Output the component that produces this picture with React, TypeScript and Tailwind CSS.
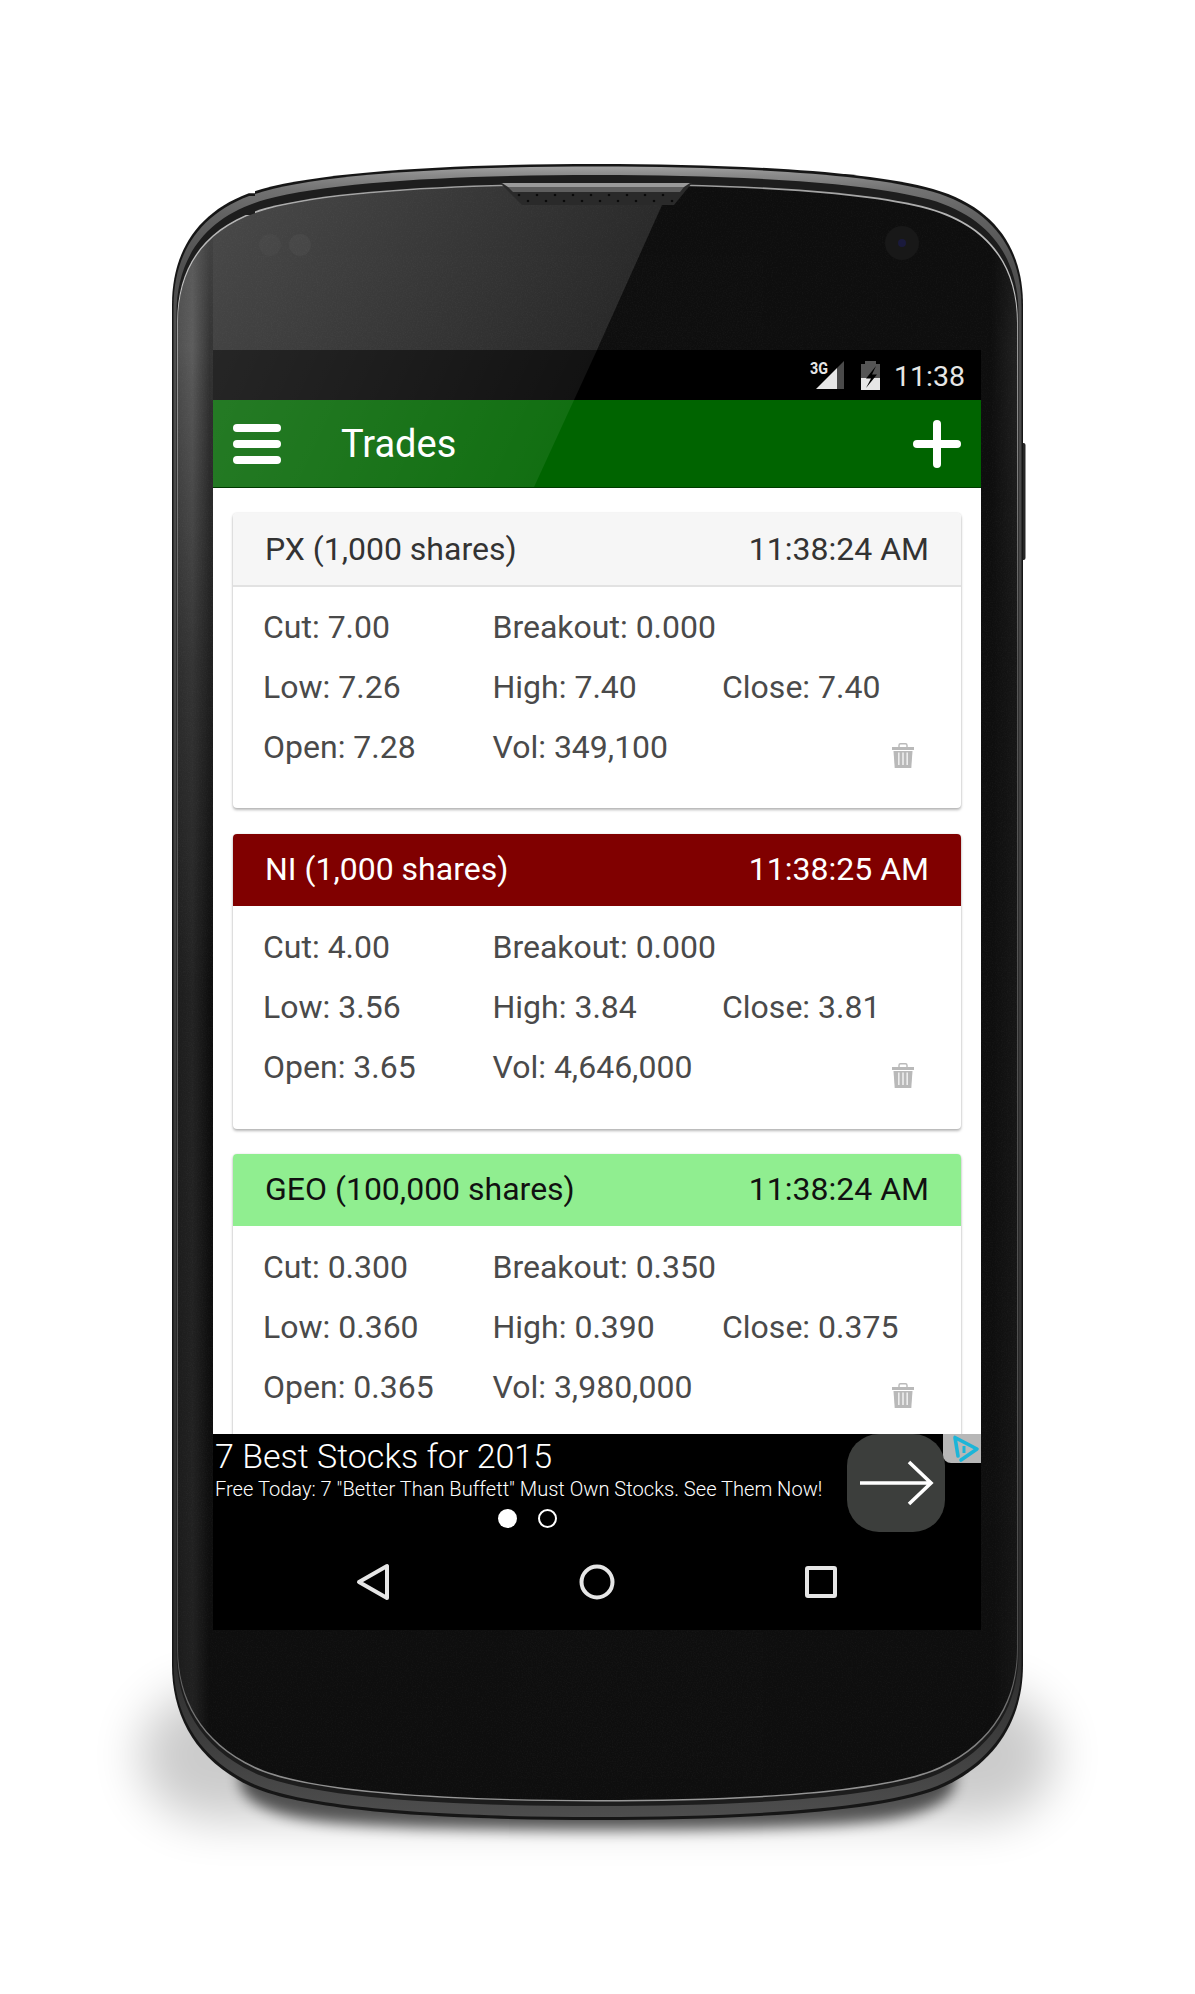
import React from "react";

const pt = (x: number, y: number, b: number[]) => {
  const [l, t, r, bt] = b;
  return `${(l + ((x - 172) / 851) * (r - l)).toFixed(1)} ${(t + ((y - 164) / 1656) * (bt - t)).toFixed(1)}`;
};
const phone = (l: number, t: number, r: number, bt: number) => {
  const b = [l, t, r, bt];
  const p = (x: number, y: number) => pt(x, y, b);
  const m = (x: number) => 1195 - x;
  return (
    `M${p(597.5, 164)} C${p(470, 164)} ${p(330, 170)} ${p(262, 189)} C${p(199, 207)} ${p(172, 250)} ${p(172, 305)} ` +
    `L${p(172, 1665)} C${p(172, 1715)} ${p(195, 1760)} ${p(250, 1786)} C${p(305, 1812)} ${p(450, 1820)} ${p(597.5, 1820)} ` +
    `C${p(m(450), 1820)} ${p(m(305), 1812)} ${p(m(250), 1786)} C${p(m(195), 1760)} ${p(m(172), 1715)} ${p(m(172), 1665)} ` +
    `L${p(m(172), 305)} C${p(m(172), 250)} ${p(m(199), 207)} ${p(m(262), 189)} C${p(m(330), 170)} ${p(m(470), 164)} ${p(597.5, 164)} Z`
  );
};
const FACE = phone(178, 185, 1017, 1800);

function PhoneBody() {
  return (
    <svg className="absolute inset-0" width={1195} height={1994} viewBox="0 0 1195 1994">
      <defs>
        <filter id="bl1" x="-30%" y="-60%" width="160%" height="220%"><feGaussianBlur stdDeviation="24" /></filter>
        <filter id="bl2" x="-10%" y="-10%" width="120%" height="120%"><feGaussianBlur stdDeviation="7" /></filter>
        <filter id="noise">
          <feTurbulence type="fractalNoise" baseFrequency="0.8" numOctaves="2" seed="3" />
          <feColorMatrix values="0 0 0 0 1  0 0 0 0 1  0 0 0 0 1  0.9 0 0 0 -0.35" />
        </filter>
        <linearGradient id="silver" x1="0" y1="164" x2="0" y2="1820" gradientUnits="userSpaceOnUse">
          <stop offset="0" stopColor="#a8a8a8" />
          <stop offset="0.0066" stopColor="#8a8a8a" />
          <stop offset="0.0157" stopColor="#727272" />
          <stop offset="0.031" stopColor="#626262" />
          <stop offset="0.064" stopColor="#505050" />
          <stop offset="0.9" stopColor="#2c2c2c" />
          <stop offset="1" stopColor="#4e4e4e" />
        </linearGradient>
        <linearGradient id="line" x1="0" y1="164" x2="0" y2="1820" gradientUnits="userSpaceOnUse">
          <stop offset="0" stopColor="#8f8f8f" />
          <stop offset="0.03" stopColor="#b4b4b4" />
          <stop offset="0.08" stopColor="#c4c4c4" />
          <stop offset="0.3" stopColor="#666" />
          <stop offset="0.9" stopColor="#5a5a5a" />
          <stop offset="1" stopColor="#a0a0a0" />
        </linearGradient>
        <linearGradient id="band" x1="178" y1="0" x2="210" y2="0" gradientUnits="userSpaceOnUse">
          <stop offset="0" stopColor="#fff" stopOpacity="0.14" />
          <stop offset="0.45" stopColor="#fff" stopOpacity="0.2" />
          <stop offset="1" stopColor="#fff" stopOpacity="0" />
        </linearGradient>
        <linearGradient id="bandR" x1="1017" y1="0" x2="990" y2="0" gradientUnits="userSpaceOnUse">
          <stop offset="0" stopColor="#fff" stopOpacity="0.08" />
          <stop offset="1" stopColor="#fff" stopOpacity="0" />
        </linearGradient>
        <linearGradient id="bandFade" x1="0" y1="185" x2="0" y2="1800" gradientUnits="userSpaceOnUse">
          <stop offset="0" stopColor="#fff" stopOpacity="0.5" />
          <stop offset="0.1" stopColor="#fff" stopOpacity="1" />
          <stop offset="0.3" stopColor="#fff" stopOpacity="0.45" />
          <stop offset="1" stopColor="#fff" stopOpacity="0.4" />
        </linearGradient>
        <mask id="bandMask" maskUnits="userSpaceOnUse" x="0" y="0" width="1195" height="1994">
          <rect x="0" y="0" width="1195" height="1994" fill="url(#bandFade)" />
        </mask>
        <linearGradient id="gloss" x1="200" y1="190" x2="560" y2="420" gradientUnits="userSpaceOnUse">
          <stop offset="0" stopColor="#fff" stopOpacity="0.25" />
          <stop offset="1" stopColor="#fff" stopOpacity="0.11" />
        </linearGradient>
        <linearGradient id="strip" x1="0" y1="185" x2="0" y2="1000" gradientUnits="userSpaceOnUse">
          <stop offset="0" stopColor="#fff" stopOpacity="0.24" />
          <stop offset="0.25" stopColor="#fff" stopOpacity="0.14" />
          <stop offset="1" stopColor="#fff" stopOpacity="0" />
        </linearGradient>
        <clipPath id="faceClip"><path d={FACE} /></clipPath>
        <pattern id="grille" x="516" y="192" width="18" height="12" patternUnits="userSpaceOnUse">
          <circle cx="3" cy="3" r="1.3" fill="#0a0a0a" />
          <circle cx="12" cy="9" r="1.3" fill="#0a0a0a" />
        </pattern>
      </defs>

      {/* soft floor shadow */}
      <rect x="140" y="1690" width="915" height="130" rx="70" fill="#000" opacity="0.2" filter="url(#bl1)" />
      <path d={phone(240, 1300, 955, 1830)} fill="#000" opacity="0.62" filter="url(#bl2)" />

      {/* side button */}
      <rect x="1020" y="443" width="5.5" height="117" rx="2" fill="#262626" />

      {/* rim */}
      <path d={phone(172, 164, 1023, 1820)} fill="#161616" />
      <path d={phone(173.5, 166.5, 1021.5, 1817)} fill="url(#silver)" />
      <path d={phone(176.5, 175, 1018.5, 1806)} fill="#1d1d1d" />
      <path d={phone(177.2, 183.4, 1017.8, 1801.4)} fill="url(#line)" />
      <path d={FACE} fill="#0e0e0e" />

      <g clipPath="url(#faceClip)">
        <rect x="178" y="185" width="840" height="1620" filter="url(#noise)" opacity="0.07" />
        <polygon points="213,185 671,185 596,352 213,352" fill="url(#gloss)" />
        <rect x="178" y="185" width="35" height="815" fill="url(#strip)" />
        <g mask="url(#bandMask)">
          <rect x="178" y="185" width="32" height="1620" fill="url(#band)" />
          <rect x="990" y="185" width="27" height="1620" fill="url(#bandR)" />
        </g>
      </g>

      {/* notch with speaker */}
      <polygon points="500,183 692,183 674,205 522,205" fill="#2a2a2a" />
      <polygon points="502,183 690,183 684,187 508,187" fill="#9a9a9a" />
      <polygon points="508,187 684,187 680,192 513,192" fill="#5e5e5e" />
      <polygon points="513,192 680,192 674,205 522,205" fill="url(#grille)" />

      {/* sensors and camera */}
      <circle cx="270" cy="245" r="11" fill="#fff" opacity="0.025" />
      <circle cx="300" cy="245" r="11" fill="#fff" opacity="0.035" />
      <circle cx="902" cy="243" r="17" fill="#181818" />
      <circle cx="902" cy="243" r="4" fill="#1a1a3c" />
    </svg>
  );
}

type Row = { cut: string; bo: string; low: string; high: string; close: string; open: string; vol: string };
type CardData = Row & { name: string; time: string; head: string; headText: string; grey: boolean };

const cards: CardData[] = [
  { name: "PX (1,000 shares)", time: "11:38:24 AM", head: "bg-[#f6f6f6]", headText: "text-[#333333]", grey: true, cut: "7.00", bo: "0.000", low: "7.26", high: "7.40", close: "7.40", open: "7.28", vol: "349,100" },
  { name: "NI (1,000 shares)", time: "11:38:25 AM", head: "bg-[#800000]", headText: "text-white", grey: false, cut: "4.00", bo: "0.000", low: "3.56", high: "3.84", close: "3.81", open: "3.65", vol: "4,646,000" },
  { name: "GEO (100,000 shares)", time: "11:38:24 AM", head: "bg-[#90ee90]", headText: "text-[#111111]", grey: false, cut: "0.300", bo: "0.350", low: "0.360", high: "0.390", close: "0.375", open: "0.365", vol: "3,980,000" },
];

function Trash() {
  return (
    <svg width="22" height="25" viewBox="0 0 22 25">
      <path d="M7 4V2.2C7 1.3 7.7 .8 8.5 .8h5c.8 0 1.5.5 1.5 1.4V4" fill="none" stroke="#b9b9b9" strokeWidth="1.4" />
      <rect x="0" y="4" width="22" height="3" fill="#b9b9b9" />
      <path d="M1.5 8h19l-1.2 17H2.7z" fill="#b9b9b9" />
      <rect x="6" y="9.5" width="1.6" height="12.5" fill="#fff" opacity="0.75" />
      <rect x="10.2" y="9.5" width="1.6" height="12.5" fill="#fff" opacity="0.75" />
      <rect x="14.4" y="9.5" width="1.6" height="12.5" fill="#fff" opacity="0.75" />
    </svg>
  );
}

function Card({ c }: { c: CardData }) {
  return (
    <div className="h-[295px] shrink-0 rounded-[4px] bg-white shadow-[0_2px_3px_rgba(0,0,0,0.28),0_0_2px_rgba(0,0,0,0.12)]">
      <div className={`flex items-center justify-between rounded-t-[4px] pl-[32px] pr-[32px] text-[32px] ${c.head} ${c.headText} ${c.grey ? "h-[74px] border-b-2 border-[#e2e2e2]" : "h-[72px] pb-[2px]"}`}>
        <span>{c.name}</span>
        <span>{c.time}</span>
      </div>
      <div className={`grid grid-cols-[229.5px_229.5px_229px] pl-[30px] text-[32px] text-[#4a4a4a] ${c.grey ? "pt-[10px]" : "pt-[11px]"}`}>
        <div className="flex h-[60px] items-center">Cut: {c.cut}</div>
        <div className="flex h-[60px] items-center">Breakout: {c.bo}</div>
        <div />
        <div className="flex h-[60px] items-center">Low: {c.low}</div>
        <div className="flex h-[60px] items-center">High: {c.high}</div>
        <div className="flex h-[60px] items-center">Close: {c.close}</div>
        <div className="flex h-[60px] items-center">Open: {c.open}</div>
        <div className="flex h-[60px] items-center">Vol: {c.vol}</div>
        <div className="flex h-[60px] items-center justify-end pr-[37px] pt-[17px]"><Trash /></div>
      </div>
    </div>
  );
}

function StatusBar() {
  return (
    <div className="flex h-[50px] items-center justify-end bg-black pr-[16px]">
      <svg width="36" height="30" viewBox="0 0 36 30" className="mr-[16px] overflow-visible">
        <polygon points="7,29 28,8 28,29" fill="#e6e6e6" />
        <polygon points="28,8 35,1 35,29 28,29" fill="#4a4a4a" />
        <text x="1" y="14" fontSize="16" fontWeight="700" fill="#e6e6e6" textLength="18" lengthAdjust="spacingAndGlyphs" fontFamily="Roboto, sans-serif">3G</text>
      </svg>
      <svg width="19" height="29" viewBox="0 0 19 29" className="mr-[14px]">
        <rect x="4" y="0" width="11" height="3" fill="#555" />
        <rect x="0" y="3" width="19" height="14" fill="#555" />
        <rect x="0" y="17" width="19" height="12" fill="#e6e6e6" />
        <polygon points="15,5 5,17.5 10,17.5 5,27 16,13.5 11,13.5 15,5" fill="#000" />
      </svg>
      <span className="mt-[4px] text-[28.5px] leading-none text-[#e6e6e6]">11:38</span>
    </div>
  );
}

function AppBar() {
  return (
    <div className="flex h-[88px] items-center justify-between border-b border-[#003a00] bg-[#006400] pl-[20px] pr-[20px]">
      <div className="flex items-center">
        <div className="flex w-[48px] flex-col gap-[8px]">
          <div className="h-[8px] rounded-full bg-white" />
          <div className="h-[8px] rounded-full bg-white" />
          <div className="h-[8px] rounded-full bg-white" />
        </div>
        <span className="ml-[60px] text-[38px] leading-none text-white">Trades</span>
      </div>
      <svg width="48" height="48" viewBox="0 0 48 48">
        <rect x="0" y="20" width="48" height="8" rx="4" fill="#fff" />
        <rect x="20" y="0" width="8" height="48" rx="4" fill="#fff" />
      </svg>
    </div>
  );
}

function AdBar() {
  return (
    <div className="relative flex h-[98px] bg-black">
      <div className="w-[634px] pl-[2px]">
        <div className="mt-[3px] whitespace-nowrap text-[34px] font-light leading-[38px] text-white">7 Best Stocks for 2015</div>
        <div className="whitespace-nowrap text-[20.08px] font-light leading-[28px] text-white">Free Today: 7 "Better Than Buffett" Must Own Stocks. See Them Now!</div>
        <div className="mt-[6px] flex justify-center gap-[21px] pr-[8px]">
          <span className="h-[19px] w-[19px] rounded-full bg-white" />
          <span className="h-[19px] w-[19px] rounded-full border-2 border-white" />
        </div>
      </div>
      <div className="flex h-[98px] w-[98px] items-center justify-center rounded-[32px] bg-[#3c3e3c]">
        <svg width="74" height="46" viewBox="0 0 74 46" className="ml-[1px]">
          <path d="M0 23H71M49 2l22 21-22 21" fill="none" stroke="#fff" strokeWidth="3.6" />
        </svg>
      </div>
      <div className="absolute right-0 top-0 flex h-[29px] w-[38px] items-center justify-end rounded-bl-[8px] bg-[#b7b7b7] pr-[1px]">
        <svg width="30" height="28" viewBox="0 0 30 28">
          <path d="M5 2.5 L27 14 L11 25 M5 2.5 L8 21" fill="none" stroke="#1cb5d8" strokeWidth="3.6" strokeLinejoin="round" strokeLinecap="round" />
          <path d="M14 11v7" stroke="#1cb5d8" strokeWidth="3" />
        </svg>
      </div>
    </div>
  );
}

function NavBar() {
  return (
    <div className="grid h-[98px] grid-cols-3 bg-black px-[48px] pt-[2px]">
      <div className="flex items-center justify-center">
        <svg width="34" height="38" viewBox="0 0 34 38">
          <path d="M31 3 V35 L3 19 Z" fill="none" stroke="#e6e6e6" strokeWidth="4" strokeLinejoin="round" />
        </svg>
      </div>
      <div className="flex items-center justify-center">
        <svg width="36" height="36" viewBox="0 0 36 36">
          <circle cx="18" cy="18" r="15.5" fill="none" stroke="#e6e6e6" strokeWidth="4" />
        </svg>
      </div>
      <div className="flex items-center justify-center">
        <svg width="34" height="34" viewBox="0 0 34 34">
          <rect x="3" y="3" width="28" height="28" rx="1" fill="none" stroke="#e6e6e6" strokeWidth="4" />
        </svg>
      </div>
    </div>
  );
}

export default function App() {
  return (
    <div className="relative h-[1994px] w-[1195px] overflow-hidden bg-white pl-[213px] pt-[350px] font-[Roboto,sans-serif]">
      <PhoneBody />
      <div className="relative flex h-[1280px] w-[768px] flex-col overflow-hidden">
        <StatusBar />
        <AppBar />
        <div className="flex min-h-0 flex-1 flex-col gap-[25.5px] overflow-hidden bg-white px-[20px] pt-[25px]">
          {cards.map((c) => (
            <Card key={c.name} c={c} />
          ))}
        </div>
        <AdBar />
        <NavBar />
        <div className="pointer-events-none absolute left-0 top-0 h-[137px] w-[384px] bg-[linear-gradient(115deg,rgba(255,255,255,0.15),rgba(255,255,255,0.06))] [clip-path:polygon(0_0,384px_0,321px_137px,0_137px)]" />
      </div>
    </div>
  );
}
